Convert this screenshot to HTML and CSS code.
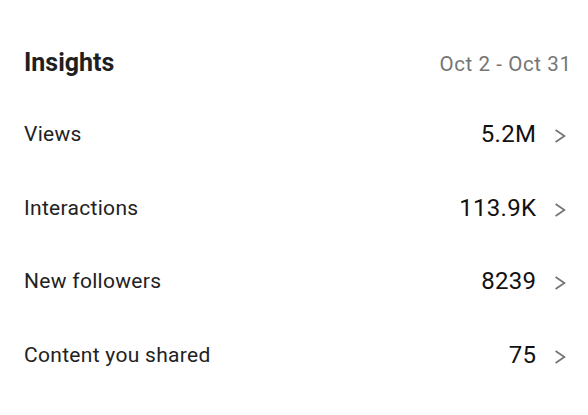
FILE: index.html
```html
<!DOCTYPE html>
<html>
<head>
<meta charset="utf-8">
<link rel="stylesheet" href="styles.css">
</head>
<body>
<section class="insights">
  <header class="head">
    <h1 class="title">Insights</h1>
    <span class="range">Oct 2 - Oct 31</span>
  </header>
  <ul class="list">
    <li class="row"><span class="label">Views</span><span class="value">5.2M</span><svg class="chev" width="12" height="14" viewBox="0 0 12 14"><path d="M1.6 1 L10.4 7 L1.6 13" fill="none" stroke="#737373" stroke-width="1.7"/></svg></li>
    <li class="row"><span class="label">Interactions</span><span class="value">113.9K</span><svg class="chev" width="12" height="14" viewBox="0 0 12 14"><path d="M1.6 1 L10.4 7 L1.6 13" fill="none" stroke="#737373" stroke-width="1.7"/></svg></li>
    <li class="row"><span class="label">New followers</span><span class="value">8239</span><svg class="chev" width="12" height="14" viewBox="0 0 12 14"><path d="M1.6 1 L10.4 7 L1.6 13" fill="none" stroke="#737373" stroke-width="1.7"/></svg></li>
    <li class="row"><span class="label">Content you shared</span><span class="value">75</span><svg class="chev" width="12" height="14" viewBox="0 0 12 14"><path d="M1.6 1 L10.4 7 L1.6 13" fill="none" stroke="#737373" stroke-width="1.7"/></svg></li>
  </ul>
</section>
</body>
</html>
```
FILE: styles.css
```css
html, body {
  margin: 0;
  padding: 0;
  background: #fff;
}
body {
  font-family: Roboto, "Noto Sans", sans-serif;
  color: #222;
}
.insights {
  padding: 49px 17px 0 24px;
}
.head {
  display: flex;
  justify-content: space-between;
  align-items: baseline;
  height: 48.5px;
}
.title {
  margin: 0;
  font-size: 25px;
  line-height: 28px;
  font-weight: 700;
  color: #1f1f1f;
}
.range {
  font-size: 20.5px;
  line-height: 28px;
  letter-spacing: 0.6px;
  margin-right: -0.6px;
  color: #757575;
}
.list {
  list-style: none;
  margin: 0;
  padding: 0;
}
.row {
  display: flex;
  align-items: center;
  height: 73.5px;
}
.label {
  flex: 1;
  font-size: 21px;
  line-height: 28px;
  letter-spacing: 0.3px;
  color: #222;
}
.value {
  font-size: 24px;
  line-height: 28px;
  letter-spacing: 0.3px;
  margin-right: -0.3px;
  color: #111;
}
.chev {
  margin: 4px 5px 0 18px;
  display: block;
}
```
